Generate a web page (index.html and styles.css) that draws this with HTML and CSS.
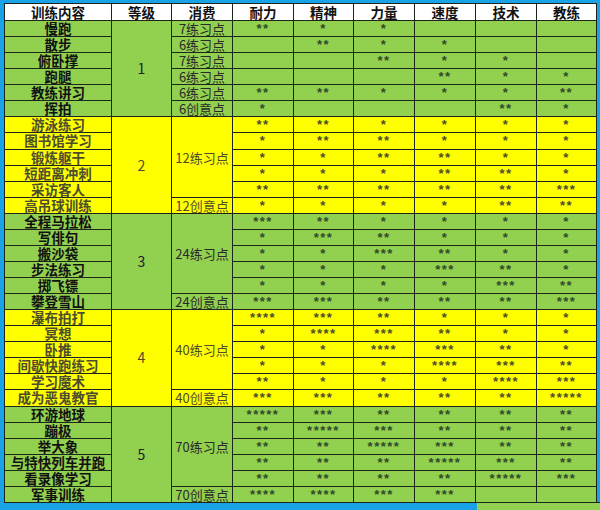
FILE: index.html
```html
<!DOCTYPE html>
<html lang="zh">
<head>
<meta charset="utf-8">
<title>训练内容</title>
<link rel="stylesheet" href="styles.css">
</head>
<body>
<div class="frame">
<table class="train">
<colgroup>
<col class="c-name"><col class="c-lv"><col class="c-cost">
<col class="c-st"><col class="c-st2"><col class="c-st"><col class="c-st"><col class="c-st"><col class="c-st2">
</colgroup>
<thead>
<tr><th>训练内容</th><th>等级</th><th>消费</th><th>耐力</th><th>精神</th><th>力量</th><th>速度</th><th>技术</th><th>教练</th></tr>
</thead>
<tbody>
<tr class="g"><td class="name">慢跑</td><td class="lv" rowspan="6">1</td><td class="cost">7练习点</td><td>**</td><td>*</td><td>*</td><td></td><td></td><td></td></tr>
<tr class="g"><td class="name">散步</td><td class="cost">6练习点</td><td></td><td>**</td><td>*</td><td>*</td><td></td><td></td></tr>
<tr class="g"><td class="name">俯卧撑</td><td class="cost">7练习点</td><td></td><td></td><td>**</td><td>*</td><td>*</td><td></td></tr>
<tr class="g"><td class="name">跑腿</td><td class="cost">6练习点</td><td></td><td></td><td></td><td>**</td><td>*</td><td>*</td></tr>
<tr class="g"><td class="name">教练讲习</td><td class="cost">6练习点</td><td>**</td><td>**</td><td>*</td><td>*</td><td>*</td><td>**</td></tr>
<tr class="g"><td class="name">挥拍</td><td class="cost">6创意点</td><td>*</td><td></td><td></td><td></td><td>**</td><td>*</td></tr>

<tr class="y"><td class="name">游泳练习</td><td class="lv" rowspan="6">2</td><td class="cost" rowspan="5">12练习点</td><td>**</td><td>**</td><td>*</td><td>*</td><td>*</td><td>*</td></tr>
<tr class="y"><td class="name">图书馆学习</td><td>*</td><td>**</td><td>**</td><td>*</td><td>*</td><td>*</td></tr>
<tr class="y"><td class="name">锻炼躯干</td><td>*</td><td>*</td><td>**</td><td>**</td><td>*</td><td>*</td></tr>
<tr class="y"><td class="name">短距离冲刺</td><td>*</td><td>*</td><td>*</td><td>**</td><td>**</td><td>*</td></tr>
<tr class="y"><td class="name">采访客人</td><td>**</td><td>**</td><td>**</td><td>**</td><td>**</td><td>***</td></tr>
<tr class="y"><td class="name">高吊球训练</td><td class="cost">12创意点</td><td>*</td><td>*</td><td>*</td><td>*</td><td>**</td><td>**</td></tr>

<tr class="g"><td class="name">全程马拉松</td><td class="lv" rowspan="6">3</td><td class="cost" rowspan="5">24练习点</td><td>***</td><td>**</td><td>*</td><td>*</td><td>*</td><td>*</td></tr>
<tr class="g"><td class="name">写俳句</td><td>*</td><td>***</td><td>**</td><td>*</td><td>*</td><td>*</td></tr>
<tr class="g"><td class="name">搬沙袋</td><td>*</td><td>*</td><td>***</td><td>**</td><td>*</td><td>*</td></tr>
<tr class="g"><td class="name">步法练习</td><td>*</td><td>*</td><td>*</td><td>***</td><td>**</td><td>*</td></tr>
<tr class="g"><td class="name">掷飞镖</td><td>*</td><td>*</td><td>*</td><td>*</td><td>***</td><td>**</td></tr>
<tr class="g"><td class="name">攀登雪山</td><td class="cost">24创意点</td><td>***</td><td>***</td><td>**</td><td>**</td><td>**</td><td>***</td></tr>

<tr class="y"><td class="name">瀑布拍打</td><td class="lv" rowspan="6">4</td><td class="cost" rowspan="5">40练习点</td><td>****</td><td>***</td><td>**</td><td>*</td><td>*</td><td>*</td></tr>
<tr class="y"><td class="name">冥想</td><td>*</td><td>****</td><td>***</td><td>**</td><td>*</td><td>*</td></tr>
<tr class="y"><td class="name">卧推</td><td>*</td><td>*</td><td>****</td><td>***</td><td>**</td><td>*</td></tr>
<tr class="y"><td class="name">间歇快跑练习</td><td>*</td><td>*</td><td>*</td><td>****</td><td>***</td><td>**</td></tr>
<tr class="y"><td class="name">学习魔术</td><td>**</td><td>*</td><td>*</td><td>*</td><td>****</td><td>***</td></tr>
<tr class="y"><td class="name">成为恶鬼教官</td><td class="cost">40创意点</td><td>***</td><td>***</td><td>**</td><td>**</td><td>**</td><td>*****</td></tr>

<tr class="g"><td class="name">环游地球</td><td class="lv" rowspan="6">5</td><td class="cost" rowspan="5">70练习点</td><td>*****</td><td>***</td><td>**</td><td>**</td><td>**</td><td>**</td></tr>
<tr class="g"><td class="name">蹦极</td><td>**</td><td>*****</td><td>***</td><td>**</td><td>**</td><td>**</td></tr>
<tr class="g"><td class="name">举大象</td><td>**</td><td>**</td><td>*****</td><td>***</td><td>**</td><td>**</td></tr>
<tr class="g"><td class="name">与特快列车并跑</td><td>**</td><td>**</td><td>**</td><td>*****</td><td>***</td><td>**</td></tr>
<tr class="g"><td class="name">看录像学习</td><td>**</td><td>**</td><td>**</td><td>**</td><td>*****</td><td>***</td></tr>
<tr class="g"><td class="name">军事训练</td><td class="cost">70创意点</td><td>****</td><td>****</td><td>***</td><td>***</td><td></td><td></td></tr>
</tbody>
</table>
<div class="smudge"></div>
</div>
</body>
</html>
```

FILE: styles.css
```css
html, body {
  margin: 0;
  padding: 0;
  background: #19a3e6;
}
body {
  width: 600px;
  height: 510px;
  overflow: hidden;
}
.frame {
  position: relative;
  padding: 3px 4px 0 4px;
}
.train {
  border-collapse: collapse;
  table-layout: fixed;
  width: 592px;
  height: 500px;
  font-family: "Noto Sans CJK SC", "DejaVu Sans", sans-serif;
}
.c-name { width: 107px; }
.c-lv { width: 60px; }
.c-cost { width: 61px; }
.c-st { width: 61px; }
.c-st2 { width: 60px; }

.train th, .train td {
  border: 1px solid #1c261c;
  padding: 0;
  text-align: center;
  vertical-align: middle;
  white-space: nowrap;
}
.train thead tr { height: 17px; }
.train th {
  background: #ffffff;
  color: #111;
  font-size: 13.5px;
  font-weight: 700;
  line-height: 14px;
}
.train tbody tr {
  height: 15px;
}
.train td {
  font-family: "Liberation Sans", sans-serif;
  font-size: 13px;
  line-height: 13px;
  color: #2f4a2a;
  letter-spacing: 1.5px;
  font-weight: 700;
}
.train tr.y td { color: #4d4d2d; }
.g td { background: #92d050; }
.y td { background: #ffff00; }

.train td.name {
  font-family: "Noto Sans CJK SC", sans-serif;
  font-size: 13.5px;
  font-weight: 700;
  color: #111;
  letter-spacing: 0;
  line-height: 13px;
}
.train td.cost {
  font-family: "Noto Sans CJK SC", sans-serif;
  font-size: 13px;
  font-weight: 400;
  color: #2a2a2a;
  letter-spacing: 0;
  line-height: 13px;
}
.train td.lv {
  font-family: "Noto Sans CJK SC", sans-serif;
  font-size: 14px;
  font-weight: 400;
  color: #222;
  letter-spacing: 0;
}
.smudge {
  position: absolute;
  left: 477px;
  top: 502px;
  width: 123px;
  height: 8px;
  background: #92d050;
  border-top: 1px solid #1c261c;
}
```
